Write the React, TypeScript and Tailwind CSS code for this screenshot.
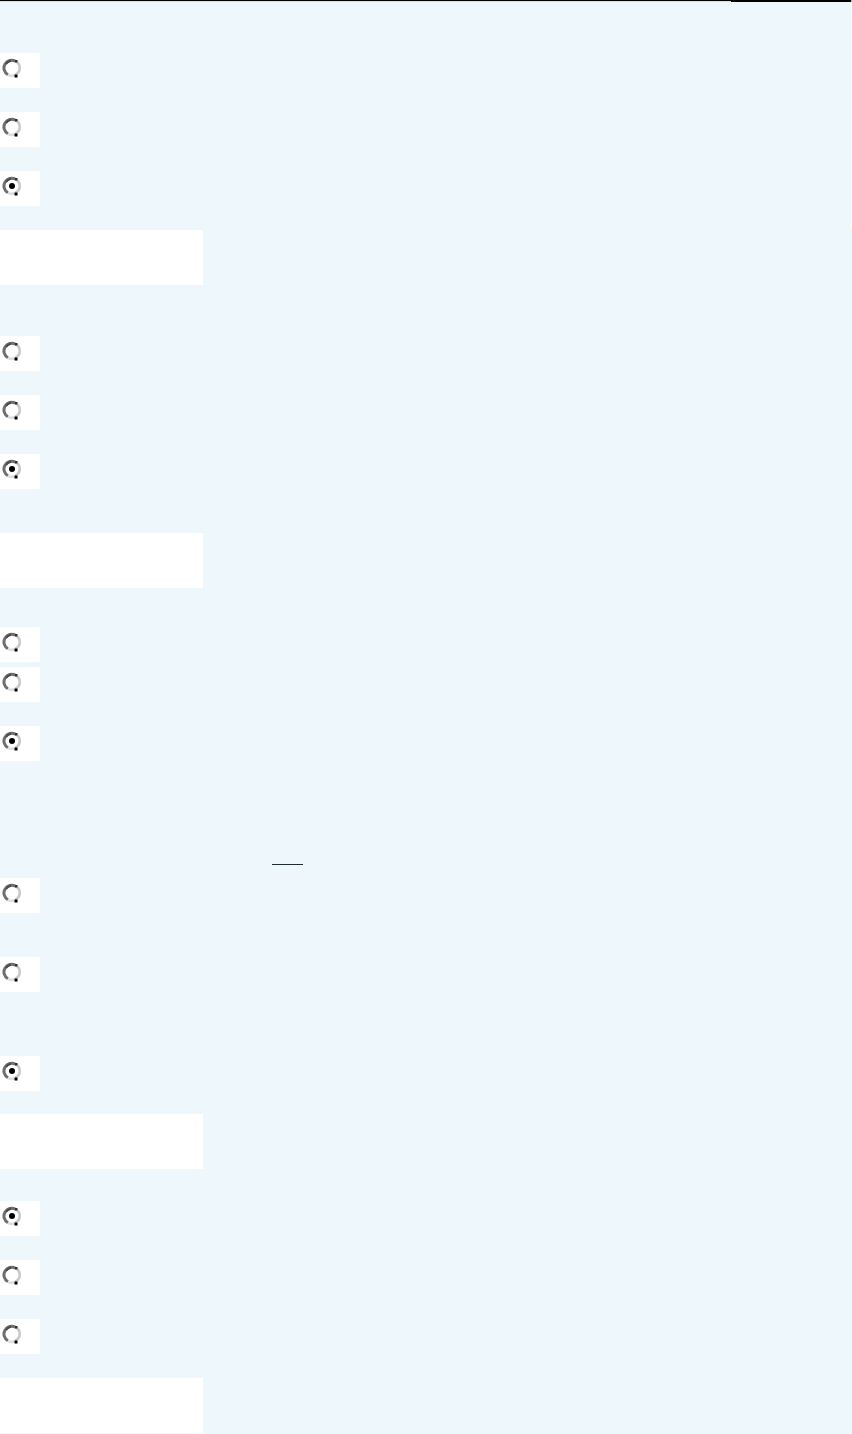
import React from "react";

type Item =
  | { kind: "radio"; top: number; checked?: boolean }
  | { kind: "input"; top: number }
  | { kind: "rule"; top: number };

// top = gap above the item, in px
const items: Item[] = [
  { kind: "radio", top: 51 },
  { kind: "radio", top: 24 },
  { kind: "radio", top: 24, checked: true },
  { kind: "input", top: 24 },
  { kind: "radio", top: 51 },
  { kind: "radio", top: 24 },
  { kind: "radio", top: 24, checked: true },
  { kind: "input", top: 44 },
  { kind: "radio", top: 39 },
  { kind: "radio", top: 5 },
  { kind: "radio", top: 24, checked: true },
  { kind: "rule", top: 103 },
  { kind: "radio", top: 13 },
  { kind: "radio", top: 44 },
  { kind: "radio", top: 64, checked: true },
  { kind: "input", top: 23 },
  { kind: "radio", top: 32, checked: true },
  { kind: "radio", top: 24 },
  { kind: "radio", top: 24 },
  { kind: "input", top: 24 },
];

const mt: Record<number, string> = {
  5: "mt-[5px]",
  13: "mt-[13px]",
  23: "mt-[23px]",
  24: "mt-[24px]",
  32: "mt-[32px]",
  39: "mt-[39px]",
  44: "mt-[44px]",
  51: "mt-[51px]",
  64: "mt-[64px]",
  103: "mt-[103px]",
};

function RadioGlyph({ checked }: { checked?: boolean }) {
  return (
    <svg width="20" height="20" viewBox="0 0 20 20" className="ml-[2px] mt-[5px]">
      <path d="M13.5 3.2 A7.3 7.3 0 1 0 6 16.8" fill="none" stroke="#6e6e6e" strokeWidth="3" />
      <path d="M13.5 3.2 A7.3 7.3 0 0 1 13.2 16.6" fill="none" stroke="#c9c9c9" strokeWidth="2.6" />
      <path d="M6 16.8 A7.3 7.3 0 0 0 12.5 17.3" fill="none" stroke="#dedede" strokeWidth="2.6" />
      <path d="M4 6 A7.3 7.3 0 0 1 9 2.8" fill="none" stroke="#4a4a4a" strokeWidth="2" />
      <rect x="12.5" y="16.5" width="3" height="3" fill="#000" />
      <rect x="13" y="2" width="2.5" height="2.5" fill="#333" />
      {checked && <circle cx="10" cy="10" r="3" fill="#000" />}
    </svg>
  );
}

export default function App() {
  return (
    <div className="relative min-h-[1434px] w-full overflow-hidden bg-[#eef7fb] font-['Liberation_Sans',sans-serif]">
      <div className="h-px w-full bg-black" />
      <div className="flex h-px w-full">
        <div className="w-[731px] bg-[#d9dcdd]" />
        <div className="flex-1 bg-black" />
      </div>
      <div className="absolute right-0 top-0 h-[228px] w-px bg-white/70" />

      <div className="flex flex-col">
        {items.map((it, i) => {
          if (it.kind === "radio")
            return (
              <div key={i} className={`${mt[it.top]} h-[35px] w-[40px] bg-white`}>
                <RadioGlyph checked={it.checked} />
              </div>
            );
          if (it.kind === "input")
            return <div key={i} className={`${mt[it.top]} h-[55px] w-[203px] bg-white`} />;
          return (
            <div key={i} className={`${mt[it.top]} h-px`}>
              <div className="ml-[272px] h-px w-[31px] bg-[#1c2b2b]" />
            </div>
          );
        })}
      </div>
    </div>
  );
}
